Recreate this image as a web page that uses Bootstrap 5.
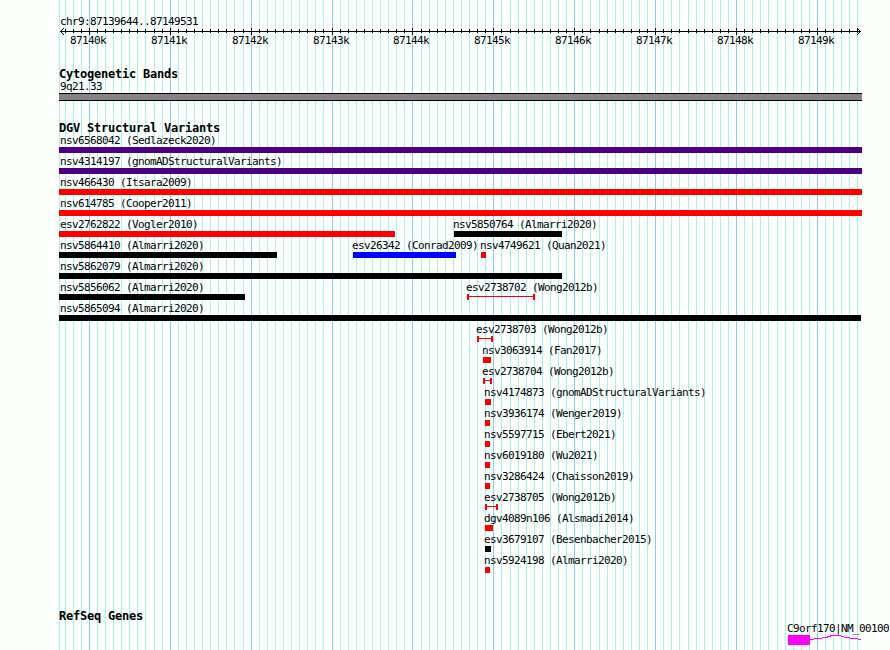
<!DOCTYPE html>
<html lang="en">
<head>
    <meta charset="UTF-8">
    <meta name="viewport" content="width=device-width, initial-scale=1.0">
    <title>chr9:87139644..87149531</title>
    <link href="https://cdn.jsdelivr.net/npm/bootstrap@5.3.3/dist/css/bootstrap.min.css" rel="stylesheet">
    <script src="https://cdn.jsdelivr.net/npm/bootstrap@5.3.3/dist/js/bootstrap.bundle.min.js"></script>
    <style>
        body { background-color: #fcfffc; color: #000; font-family: "DejaVu Sans Mono", monospace; font-size: 11px; line-height: 13px; letter-spacing: -0.62px; }
        .browser { width: 890px; height: 650px; padding-top: 15px; }
        .browser svg { display: block; shape-rendering: crispEdges; }
        .grid-lines { z-index: 0; }
        .tracks { z-index: 1; }
        .line-text { height: 13px; padding-left: 60px; }
        .track-title { height: 12px; margin: 0; padding-left: 59px; font-size: 12px; line-height: 12px; font-weight: bold; letter-spacing: -0.22px; }
        .ruler { height: 6px; }
        .ruler svg { overflow: visible; }
        .ruler-labels { height: 34px; }
        .band { width: 803px; height: 8px; margin: 0 0 21px 59px; background-color: #868286; border-top: 1px solid #000; border-bottom: 1px solid #000; }
        .variants { padding-bottom: 35px; }
        .lane { height: 21px; }
        .feature { width: 0; white-space: nowrap; }
        .feature-name { height: 13px; margin-left: -1px; }
        .from-edge .feature-name { margin-left: 1px; }
        .glyph { height: 6px; }
        .indigo { background-color: #4b0082; }
        .red { background-color: #f00; }
        .black { background-color: #000; }
        .blue { background-color: #00f; }
        .range { border: solid #f00; border-width: 0 2px; padding-top: 2px; }
        .range::before { content: ""; display: block; height: 1px; background-color: #f00; }
        .gene { padding-left: 787px; white-space: nowrap; }
        .exon { width: 22px; height: 10px; margin-left: 1px; background-color: #f0f; }
    </style>
</head>
<body>

<div class="browser position-relative overflow-hidden">
    <svg id="gridLines" class="grid-lines position-absolute top-0 start-0" width="890" height="650"></svg>

    <div class="tracks position-relative">
        <div class="line-text">chr9:87139644..87149531</div>
        <div class="ruler"><svg id="ruler" width="890" height="7"></svg></div>
        <div id="rulerLabels" class="ruler-labels d-flex"></div>

        <h2 class="track-title">Cytogenetic Bands</h2>
        <div class="line-text">9q21.33</div>
        <div class="band"></div>

        <h2 class="track-title">DGV Structural Variants</h2>
        <div id="variants" class="variants"></div>

        <h2 class="track-title">RefSeq Genes</h2>
        <div class="gene">
            <div>C9orf170|NM_00100</div>
            <div class="d-flex">
                <div class="exon"></div>
                <svg width="52" height="10"><polyline points="0,4.5 8,3.5 16,2.5 22,0.5 29,0.5 36,2.5 44,3.5 51,4.5" fill="none" stroke="#f0f"/></svg>
            </div>
        </div>
    </div>
</div>

<script>
    const regionStart = 87139644;
    const regionEnd = 87149531;
    const left = 60;
    const scale = 800 / (regionEnd - regionStart);
    const toX = bp => Math.round(left + (bp - regionStart) * scale - 0.02);

    // Grid and ruler
    let lines = '<rect x="59" y="0" width="1" height="650" fill="#afeeee"/>';
    let ticks = '<rect x="60" y="3" width="801" height="1"/>' +
        '<path d="M60 3h1v1h-1zM61 2h1v3h-1zM62 1h1v1h-1zM62 5h1v1h-1zM63 0h1v1h-1zM63 6h1v1h-1z"/>' +
        '<path d="M860 3h1v1h-1zM859 2h1v3h-1zM858 1h1v1h-1zM858 5h1v1h-1zM857 0h1v1h-1zM857 6h1v1h-1z"/>';
    let labels = '';
    let cursor = 0;
    for (let bp = 87139700; bp <= regionEnd; bp += 100) {
        const x = toX(bp);
        const major = bp % 1000 === 0;
        lines += `<rect x="${x}" y="0" width="1" height="650" fill="${major ? '#87ceeb' : '#afeeee'}"/>`;
        ticks += major ? `<rect x="${x}" y="0" width="1" height="7"/>` : `<rect x="${x}" y="1" width="1" height="4"/>`;
        if (major) {
            labels += `<div class="feature" style="margin-left: ${x - 19 - cursor}px">${bp / 1000}k</div>`;
            cursor = x - 19;
        }
    }
    document.getElementById('gridLines').innerHTML = lines;
    document.getElementById('ruler').innerHTML = ticks;
    document.getElementById('rulerLabels').innerHTML = labels;

    // name, glyph, start, end
    const lanes = [
        [['nsv6568042 (Sedlazeck2020)', 'indigo', 59, 862]],
        [['nsv4314197 (gnomADStructuralVariants)', 'indigo', 59, 862]],
        [['nsv466430 (Itsara2009)', 'red', 59, 862]],
        [['nsv614785 (Cooper2011)', 'red', 59, 862]],
        [['esv2762822 (Vogler2010)', 'red', 59, 395], ['nsv5850764 (Almarri2020)', 'black', 454, 562]],
        [['nsv5864410 (Almarri2020)', 'black', 59, 277], ['esv26342 (Conrad2009)', 'blue', 353, 456], ['nsv4749621 (Quan2021)', 'red', 481, 486]],
        [['nsv5862079 (Almarri2020)', 'black', 59, 562]],
        [['nsv5856062 (Almarri2020)', 'black', 59, 245], ['esv2738702 (Wong2012b)', 'range', 467, 535]],
        [['nsv5865094 (Almarri2020)', 'black', 59, 861]],
        [['esv2738703 (Wong2012b)', 'range', 477, 493]],
        [['nsv3063914 (Fan2017)', 'red', 483, 491]],
        [['esv2738704 (Wong2012b)', 'range', 483, 492]],
        [['nsv4174873 (gnomADStructuralVariants)', 'red', 485, 491]],
        [['nsv3936174 (Wenger2019)', 'red', 485, 490]],
        [['nsv5597715 (Ebert2021)', 'red', 485, 490]],
        [['nsv6019180 (Wu2021)', 'red', 485, 490]],
        [['nsv3286424 (Chaisson2019)', 'red', 485, 490]],
        [['esv2738705 (Wong2012b)', 'range', 485, 498]],
        [['dgv4089n106 (Alsmadi2014)', 'red', 485, 493]],
        [['esv3679107 (Besenbacher2015)', 'black', 485, 491]],
        [['nsv5924198 (Almarri2020)', 'red', 485, 490]]
    ];

    document.getElementById('variants').innerHTML = lanes.map(lane => {
        let pos = 0;
        const features = lane.map(([name, glyph, start, end]) => {
            const gap = start - pos;
            pos = start;
            return `<div class="feature${start === 59 ? ' from-edge' : ''}" style="margin-left: ${gap}px">
                <div class="feature-name">${name}</div>
                <div class="glyph ${glyph}" style="width: ${end - start}px"></div>
            </div>`;
        });
        return `<div class="lane d-flex">${features.join('')}</div>`;
    }).join('');
</script>

</body>
</html>
